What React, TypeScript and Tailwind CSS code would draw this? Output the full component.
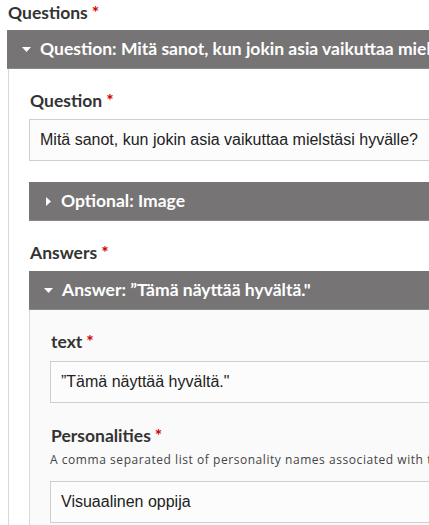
import React from "react";

const heading = { fontFamily: "Lato, 'Open Sans', sans-serif" };
const inputFont = { fontFamily: "'Liberation Sans', Arial, sans-serif" };
const descFont = { fontFamily: "'Open Sans', sans-serif" };

function Star() {
  return <span className="text-[#d40000] ml-[4px]">*</span>;
}

function Label({ children }: { children: React.ReactNode }) {
  return (
    <div style={heading} className="text-[17.5px] font-bold text-[#333] leading-[20px]">
      {children}
      <Star />
    </div>
  );
}

function Bar({ text, open }: { text: string; open: boolean }) {
  return (
    <div
      style={heading}
      className="h-[39px] bg-[#767475] border-b border-[#8a8889] text-white text-[17.5px] font-bold flex items-center whitespace-nowrap overflow-hidden pl-[15px]"
    >
      {open ? (
        <svg width="9" height="5" viewBox="0 0 9 5" className="mr-[9px] shrink-0">
          <path d="M0 0 H9 L4.5 5 Z" fill="#fff" />
        </svg>
      ) : (
        <svg width="5" height="9" viewBox="0 0 5 9" className="mr-[10px] ml-[2px] shrink-0">
          <path d="M0 0 V9 L5 4.5 Z" fill="#fff" />
        </svg>
      )}
      {text}
    </div>
  );
}

function Input({ value }: { value: string }) {
  return (
    <div
      style={inputFont}
      className="h-[42px] border border-[#cfcfcf] bg-[#fcfcfc] flex items-center pl-[10px] text-[16px] text-[#222] whitespace-nowrap overflow-hidden"
    >
      {value}
    </div>
  );
}

export default function App() {
  return (
    <div className="w-[429px] h-[525px] overflow-hidden bg-white pl-[7px]">
      <div className="w-[460px]">
        <div className="pt-[3px] pl-[1px] h-[30px]">
          <Label>Questions</Label>
        </div>
        <Bar open text="Question: Mitä sanot, kun jokin asia vaikuttaa mielstäsi hyvälle?" />
        <div className="ml-[1px] border-l border-[#d8d8d8] pl-[20px] pt-[22px] bg-white h-[500px]">
          <div className="pl-[1px] h-[28px]">
            <Label>Question</Label>
          </div>
          <Input value="Mitä sanot, kun jokin asia vaikuttaa mielstäsi hyvälle?" />
          <div className="h-[21px]" />
          <Bar open={false} text="Optional: Image" />
          <div className="pl-[1px] pt-[22px] h-[50px]">
            <Label>Answers</Label>
          </div>
          <Bar open text={'Answer: ”Tämä näyttää hyvältä."'} />
          <div className="border-l border-[#d8d8d8] bg-[#fafafa] pl-[20px] pt-[22px] h-[300px]">
            <div className="pl-[1px] h-[29px]">
              <Label>text</Label>
            </div>
            <Input value={'”Tämä näyttää hyvältä."'} />
            <div className="pl-[1px] pt-[23px] h-[49px]">
              <Label>Personalities</Label>
            </div>
            <div style={descFont} className="text-[12px] text-[#444] tracking-[0.55px] leading-[16px] whitespace-nowrap h-[29px]">
              A comma separated list of personality names associated with this answer.
            </div>
            <Input value="Visuaalinen oppija" />
          </div>
        </div>
      </div>
    </div>
  );
}
